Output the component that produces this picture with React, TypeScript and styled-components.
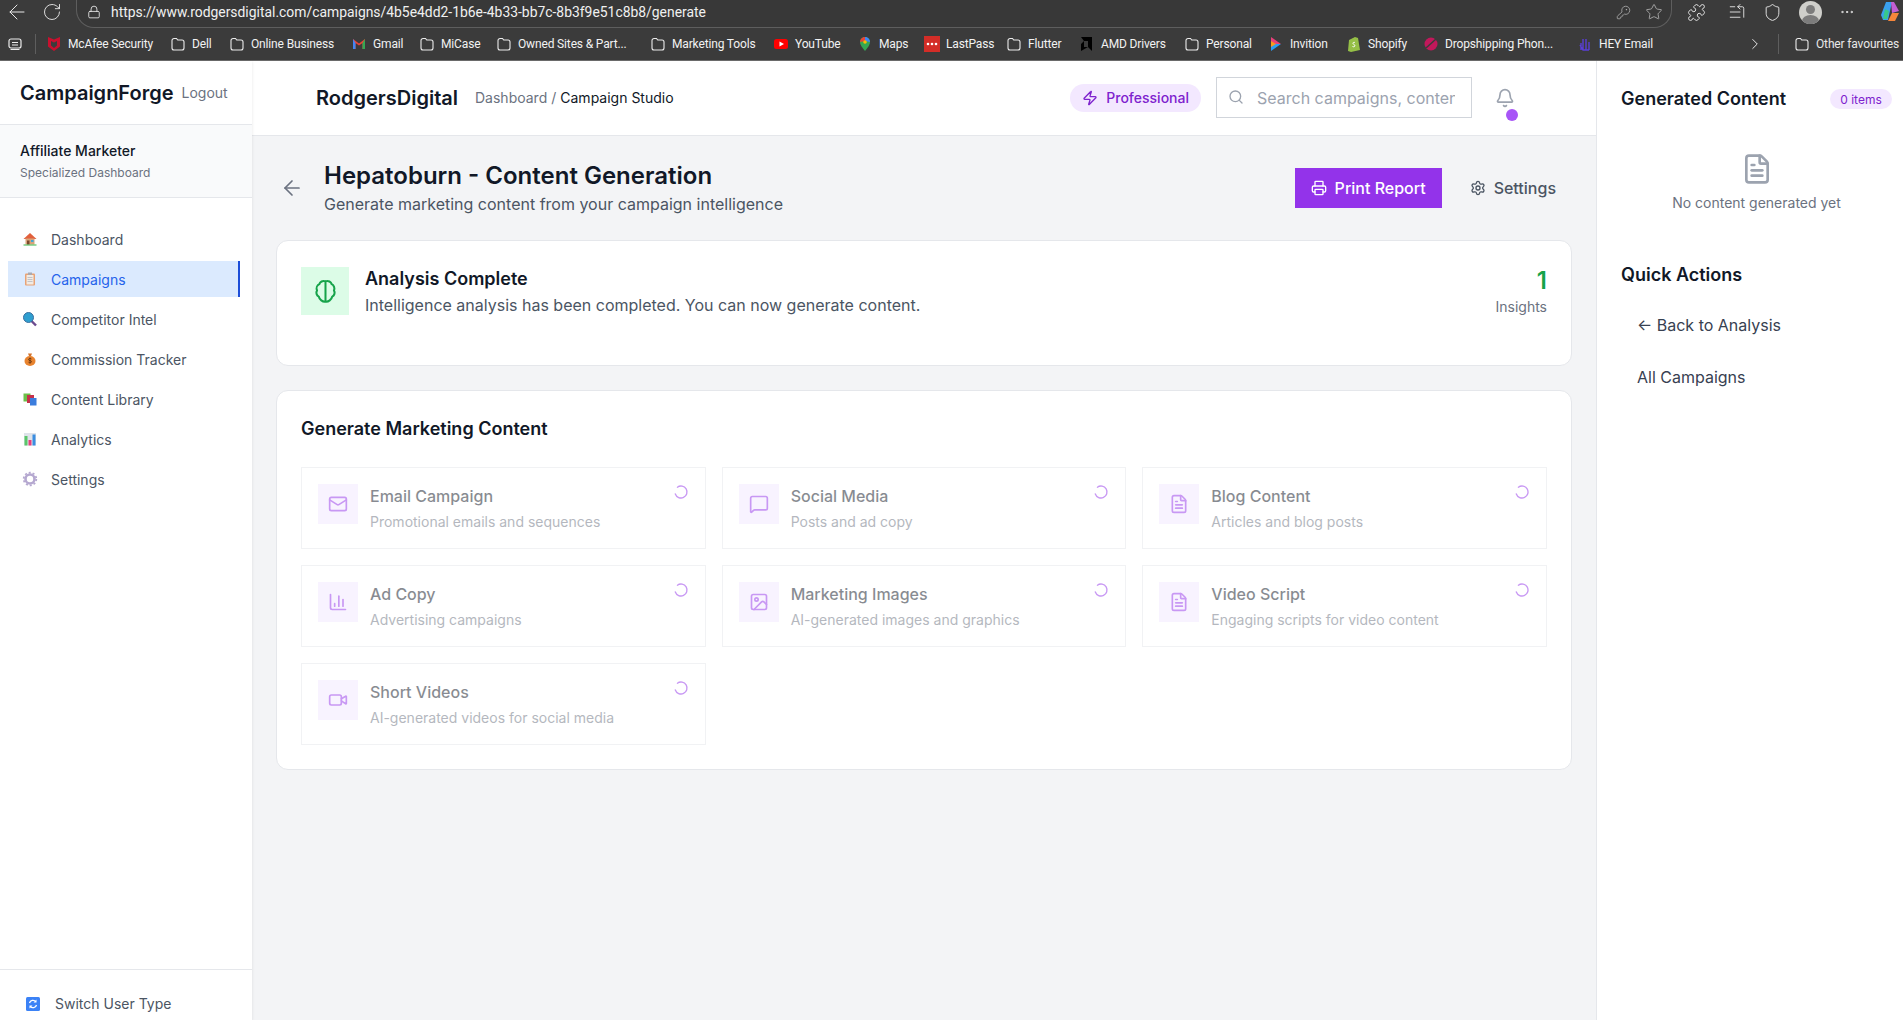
import React from "react";
import styled, { createGlobalStyle } from "styled-components";
import {
  ArrowLeft, Bell, ChartColumn, Ellipsis, FileText, Image, KeyRound, ListStart, Loader2, Lock, Mail,
  MessageSquare, Printer, Puzzle, RotateCw, Search, Settings, Shield, Star, Video, Zap, ChevronRight,
} from "lucide-react";

const Global = createGlobalStyle`
  * { box-sizing: border-box; }
  html, body { margin: 0; padding: 0; height: 100%; overflow: hidden; background: #f3f4f6; }
  body { font-family: Inter, "Liberation Sans", sans-serif; color: #111827; }
`;

const Page = styled.div`display: flex; flex-direction: column; width: 1903px; height: 1020px; overflow: hidden;`;

/* Browser chrome */
const Chrome = styled.div`
  height: 61px; flex: none; background: #3b3b3b; color: #f2f2f2; border-bottom: 1px solid #6a6a6a;
  font-family: Roboto, "Liberation Sans", sans-serif; display: flex; flex-direction: column;
`;
const AddressRow = styled.div`height: 27px; display: flex; align-items: flex-start;`;
const NavBtn = styled.span`width: 34px; height: 24px; display: flex; align-items: center; justify-content: center; color: #e8e8e8; margin-right: 1px;`;
const Omnibox = styled.div`
  width: 1596px; height: 31px; margin: -3px 0 0 6px; display: flex; align-items: center; padding: 3px 0 3px 10px;
  border: 1px solid #5e5e5e; border-top: 0; border-radius: 0 0 18px 18px; background: #383838;
`;
const Url = styled.span`font-size: 13.9px; margin-left: 10px; color: #f0f0f0; white-space: nowrap;`;
const OmniEnd = styled.div`margin-left: auto; display: flex; align-items: center; gap: 14px; padding-right: 8px; color: #b5b5b5;`;
const ToolIcons = styled.div`display: flex; align-items: center; height: 24px; margin-left: 15px; color: #e8e8e8;`;
const ToolSlot = styled.span<{ $ml: number }>`display: flex; margin-left: ${(p) => p.$ml}px;`;
const Avatar = styled.span`width: 23px; height: 23px; border-radius: 50%; background: #cfcfcb; position: relative; overflow: hidden; display: block;
  &::before { content: ""; position: absolute; left: 7px; top: 4px; width: 9px; height: 9px; border-radius: 50%; background: #7c7c7c; }
  &::after { content: ""; position: absolute; left: 3px; top: 14px; width: 17px; height: 12px; border-radius: 50%; background: #7c7c7c; }
`;
const BookmarkRow = styled.div`flex: 1; display: flex; align-items: center; padding-left: 7px; font-size: 12px; letter-spacing: -0.15px; white-space: nowrap;`;
const BookmarkItem = styled.span<{ $w: number }>`display: flex; align-items: center; gap: 6px; width: ${(p) => p.$w}px; flex: none;`;
const Divider = styled.span<{ $l: number; $r: number }>`width: 1px; height: 20px; background: #5e5e5e; margin: 0 ${(p) => p.$r}px 0 ${(p) => p.$l}px; flex: none;`;
const EndGroup = styled.div`margin-left: auto; display: flex; align-items: center; color: #e8e8e8;`;

/* Body */
const Body = styled.div`flex: 1; display: flex; min-height: 0;`;

const Sidebar = styled.aside`width: 252px; flex: none; background: #fff; display: flex; flex-direction: column; box-shadow: 0 1px 3px rgba(0,0,0,.1); z-index: 2;`;
const Brand = styled.div`height: 64px; display: flex; align-items: center; padding-left: 20px; gap: 8px; border-bottom: 1px solid #e5e7eb;`;
const BrandName = styled.div`font-size: 20px; font-weight: 600; line-height: 28px; color: #111827;`;
const Logout = styled.span`font-size: 14px; color: #6b7280;`;
const UserBox = styled.div`height: 73px; padding: 16px 20px 0; background: #f9fafb; border-bottom: 1px solid #e5e7eb;`;
const UserName = styled.div`font-size: 14px; font-weight: 500; line-height: 20px; color: #111827;`;
const UserSub = styled.div`font-size: 12px; line-height: 16px; margin-top: 4px; color: #6b7280;`;
const Nav = styled.nav`padding: 23px 12px 0 8px; display: flex; flex-direction: column; gap: 4px;`;
const NavItem = styled.div<{ $active?: boolean }>`
  height: 36px; display: flex; align-items: center; gap: 13px; padding-left: 14px; font-size: 14px;
  color: ${(p) => (p.$active ? "#2563eb" : "#4b5563")};
  background: ${(p) => (p.$active ? "#dbeafe" : "transparent")};
  border-right: 2px solid ${(p) => (p.$active ? "#1d4ed8" : "transparent")};
`;
const SideFoot = styled.div`margin-top: auto; height: 51px; border-top: 1px solid #e5e7eb; display: flex; align-items: center; padding: 17px 0 0 26px; gap: 15px; font-size: 14px; color: #4b5563;`;

const Main = styled.main`flex: 1; min-width: 0; display: flex; flex-direction: column; background: #f3f4f6;`;
const TopBar = styled.header`height: 75px; flex: none; background: #fff; border-bottom: 1px solid #e5e7eb; display: flex; align-items: center; padding: 0 0 1px 64px;`;
const Org = styled.div`font-size: 20px; font-weight: 600; color: #111827; margin-right: 17px;`;
const Crumbs = styled.div`font-size: 14px; color: #6b7280; display: flex; gap: 4px;`;
const CrumbNow = styled.span`color: #111827;`;
const TopRight = styled.div`margin-left: auto; display: flex; align-items: center; padding-right: 81px;`;
const Plan = styled.span`height: 28px; display: flex; align-items: center; gap: 8px; padding: 0 12px; border-radius: 999px; background: #f3e8ff; color: #7e22ce; font-size: 14px; font-weight: 500;`;
const SearchBox = styled.div`position: relative; width: 256px; height: 41px; margin-left: 15px; color: #9ca3af;
  svg { position: absolute; left: 12px; top: 12px; }
`;
const SearchInput = styled.input`width: 100%; height: 100%; border: 1px solid #d1d5db; background: #fff; padding: 0 16px 0 40px; font: 16px Inter, sans-serif; outline: 0; border-radius: 0;
  &::placeholder { color: #9ca3af; opacity: 1; }
`;
const BellWrap = styled.span`position: relative; margin-left: 23px; width: 20px; height: 20px; color: #9ca3af; display: block;`;
const BellDot = styled.span`position: absolute; left: 11px; top: 21px; width: 12px; height: 12px; border-radius: 50%; background: #a855f7;`;

const Content = styled.div`padding: 24px 24px; display: flex; flex-direction: column; gap: 24px;`;
const HeadRow = styled.div`display: flex; align-items: center; height: 56px; margin-bottom: 0;`;
const BackIcon = styled.span`width: 24px; flex: none; margin: 0 20px 0 4px; color: #6b7280; display: flex;`;
const PageTitle = styled.h1`margin: 0; font-size: 24px; line-height: 32px; font-weight: 600; color: #111827;`;
const PageSub = styled.p`margin: 0; font-size: 16px; line-height: 24px; color: #4b5563;`;
const HeadActions = styled.div`margin-left: auto; display: flex; align-items: center; gap: 12px;`;
const PrimaryBtn = styled.button`height: 40px; width: 147px; border: 0; background: #9333ea; color: #fff; display: flex; align-items: center; justify-content: center; gap: 8px; font: 500 16px Inter, sans-serif;`;
const GhostBtn = styled.button`height: 40px; border: 0; background: transparent; color: #4b5563; display: flex; align-items: center; gap: 8px; padding: 0 16px; font: 500 16px Inter, sans-serif;`;

const Card = styled.section`background: #fff; border: 1px solid #e5e7eb; border-radius: 12px; padding: 24px;`;
const StatusRow = styled.div`display: flex; align-items: center; margin-bottom: 24px;`;
const StatusIcon = styled.span`width: 48px; height: 48px; background: #dcfce7; color: #16a34a; display: flex; align-items: center; justify-content: center; margin-right: 16px;`;
const StatusTitle = styled.div`font-size: 18px; line-height: 28px; font-weight: 600; color: #111827;`;
const StatusText = styled.div`font-size: 16px; line-height: 24px; color: #4b5563;`;
const StatBox = styled.div`margin-left: auto; text-align: right;`;
const StatNum = styled.div`font-size: 24px; line-height: 32px; font-weight: 600; color: #16a34a;`;
const StatLabel = styled.div`font-size: 14px; line-height: 20px; color: #6b7280;`;

const SectionTitle = styled.h2`margin: 0 0 24px; font-size: 18px; line-height: 28px; font-weight: 600; color: #111827;`;
const Grid = styled.div`display: grid; grid-template-columns: repeat(3, 1fr); gap: 16px;`;
const Tile = styled.div`position: relative; height: 82px; border: 1px solid #e5e7eb; padding: 16px; display: flex; gap: 12px; opacity: .5; background: #fff;`;
const TileIcon = styled.span`width: 40px; height: 40px; background: #f3e8ff; color: #9333ea; display: flex; align-items: center; justify-content: center; flex: none;`;
const TileTitle = styled.div`font-size: 16px; line-height: 24px; font-weight: 500; color: #111827;`;
const TileDesc = styled.div`font-size: 14px; line-height: 20px; margin-top: 4px; color: #6b7280;`;
const Spinner = styled.span`position: absolute; right: 16px; top: 16px; color: #9333ea; display: flex; transform: rotate(233deg);`;

const Aside = styled.aside`width: 307px; flex: none; background: #fff; border-left: 1px solid #e5e7eb; padding: 24px 11px 0 24px;`;
const AsideHead = styled.div`display: flex; align-items: center; justify-content: space-between; height: 28px;`;
const AsideTitle = styled.h3`margin: 0; font-size: 18px; line-height: 28px; font-weight: 600; color: #111827;`;
const Count = styled.span`height: 20px; width: 62px; display: flex; align-items: center; justify-content: center; border-radius: 999px; background: #f3e8ff; color: #7e22ce; font-size: 12px;`;
const Empty = styled.div`display: flex; flex-direction: column; align-items: center; padding: 40px 0 48px; gap: 8px; color: #9ca3af;`;
const EmptyText = styled.div`font-size: 14px; line-height: 20px; color: #6b7280;`;
const QuickList = styled.div`margin-top: 10px; display: flex; flex-direction: column;`;
const QuickLink = styled.div`height: 52px; padding-left: 16px; display: flex; align-items: center; font-size: 16px; color: #374151;`;

const Folder = () => (
  <svg width="16" height="16" viewBox="0 0 16 16" fill="none" stroke="#ececec" strokeWidth="1.1"><path d="M2 4.5a2 2 0 0 1 2-2h2.5l1.2 1.5H12a2 2 0 0 1 2 2V12a2 2 0 0 1-2 2H4a2 2 0 0 1-2-2z" /></svg>
);
const Fav = ({ children }: { children: React.ReactNode }) => <svg width="16" height="16" viewBox="0 0 16 16">{children}</svg>;

const bookmarks: [string, number, React.ReactNode][] = [
  ["McAfee Security", 124, <Fav><path d="M2 1l6 2.500L14 1v9.500L8 15l-6-4.500z" fill="#c8102e" /><path d="M5 5l3 1.500L11 5v4.500L8 12 5 9.500z" fill="#3b3b3b" /></Fav>],
  ["Dell", 59, <Folder />],
  ["Online Business", 122, <Folder />],
  ["Gmail", 68, <Fav><path d="M2 3v10h2.500V7L8 9.500 11.500 7v6H14V3l-6 4.500z" fill="#ea4335" /><path d="M2 3v10h2.500V7z" fill="#4285f4" /><path d="M14 3v10h-2.500V7z" fill="#34a853" /></Fav>],
  ["MiCase", 77, <Folder />],
  ["Owned Sites & Part...", 154, <Folder />],
  ["Marketing Tools", 123, <Folder />],
  ["YouTube", 84, <Fav><rect x="1" y="3" width="14" height="10" rx="2.500" fill="#f00" /><path d="M6.500 5.500v5L11 8z" fill="#fff" /></Fav>],
  ["Maps", 67, <Fav><path d="M8 1a5 5 0 0 0-5 5c0 3.500 5 9 5 9s5-5.500 5-9a5 5 0 0 0-5-5z" fill="#34a853" /><path d="M8 1a5 5 0 0 0-5 5l5-1z" fill="#ea4335" /><path d="M8 1a5 5 0 0 1 5 5L8 5z" fill="#4285f4" /><circle cx="8" cy="6" r="1.800" fill="#fbbc04" /></Fav>],
  ["LastPass", 82, <Fav><rect width="16" height="16" fill="#d32d27" /><circle cx="4" cy="8" r="1.300" fill="#fff" /><circle cx="8" cy="8" r="1.300" fill="#fff" /><circle cx="12" cy="8" r="1.300" fill="#fff" /></Fav>],
  ["Flutter", 73, <Folder />],
  ["AMD Drivers", 105, <Fav><path d="M2 1h11v14l-4-4V5H5z" fill="#000" /><path d="M2 15V8l3-3v6h4z" fill="#000" /></Fav>],
  ["Personal", 84, <Folder />],
  ["Invition", 78, <Fav><path d="M3 1l10 7H3z" fill="#e8407a" /><path d="M3 15l10-7H3z" fill="#2a9df4" /><path d="M3 5l5 3-5 3z" fill="#f79a1f" /></Fav>],
  ["Shopify", 77, <Fav><path d="M3 4l6-3 3 1 2 12-9 2-3-1z" fill="#95bf47" /><path d="M9 6.500c-2-.7-3 1-1 2s.5 3-1.500 2" stroke="#fff" fill="none" /></Fav>],
  ["Dropshipping Phon...", 154, <Fav><circle cx="8" cy="8" r="6.500" fill="#c2185b" /><path d="M3 12L13 3" stroke="#3b3b3b" strokeWidth="1.500" /></Fav>],
  ["HEY Email", 80, <Fav><path d="M4 14V7m2 7V3m3 11V3m3 11V6M3 9l3 5h6" stroke="#5a3fd6" strokeWidth="1.400" fill="none" /></Fav>],
];

const NavEmoji: Record<string, React.ReactNode> = {
  Dashboard: <><path d="M1.500 8L8 2l6.500 6z" fill="#e2603c" /><rect x="3.500" y="7.500" width="9" height="6" fill="#d9a37a" /><rect x="5" y="9.500" width="2.500" height="4" fill="#7a4a2e" /><rect x="9" y="9" width="2.500" height="2" fill="#3fa7d6" /><rect x="1.500" y="13.500" width="13" height="1" fill="#3bb54a" /></>,
  Campaigns: <><rect x="3" y="2.500" width="10" height="12" rx="1" fill="#e8a274" /><rect x="4.500" y="4" width="7" height="9.500" fill="#f1ebe3" /><rect x="6" y="1.500" width="4" height="2.500" fill="#a9a9b0" /><path d="M5.500 6.500h5M5.500 8.500h5M5.500 10.500h5" stroke="#b8b8c0" strokeWidth=".8" /></>,
  "Competitor Intel": <><path d="M9 9.500l5 5" stroke="#6b4a8e" strokeWidth="2.400" /><circle cx="6.500" cy="6.500" r="5" fill="#2f9fd0" stroke="#3a6e9e" /></>,
  "Commission Tracker": <><ellipse cx="8" cy="10" rx="5.500" ry="5" fill="#e8832e" /><path d="M6 2.500h4L9 5H7z" fill="#d4722a" /><path d="M9.500 8c-1-1-3-.6-3 .6s3 .8 3 2-2 1.600-3 .6M8 6.500v6" stroke="#5a3010" strokeWidth=".8" fill="none" /></>,
  "Content Library": <><rect x="1.500" y="2.500" width="7" height="8" fill="#6cc04a" /><rect x="5" y="4" width="7" height="8" fill="#c7304a" /><rect x="8" y="7" width="6.500" height="7.500" fill="#3b7ddd" /></>,
  Analytics: <><rect x="2" y="2" width="12" height="12.500" fill="#dfe3ea" /><rect x="2.500" y="5" width="3" height="9.500" fill="#5bc66a" /><rect x="6.500" y="9" width="3" height="5.500" fill="#e83e7c" /><rect x="10.500" y="3.500" width="3" height="11" fill="#3b8de0" /></>,
  Settings: <><circle cx="8" cy="8" r="4.500" fill="none" stroke="#b5a8d0" strokeWidth="2.600" /><circle cx="8" cy="8" r="6.300" fill="none" stroke="#b5a8d0" strokeWidth="1.800" strokeDasharray="2 1.950" /></>,
};
const navItems = ["Dashboard", "Campaigns", "Competitor Intel", "Commission Tracker", "Content Library", "Analytics", "Settings"];

const BrainGlyph = () => (
  <svg width="27" height="27" viewBox="0 0 24 24" fill="none" stroke="currentColor" strokeWidth="1.800" strokeLinejoin="round" strokeLinecap="round">
    <path d="M12 3v18M12 3c-2.500-1-5 .5-5.500 2.500C4.500 6.500 3.500 9 4.500 11c-1.200 2-.5 4.500 1.500 5.500.5 2.500 3.500 5 6 4.500 2.500.5 5.500-2 6-4.500 2-1 2.700-3.500 1.500-5.500 1-2 0-4.500-2-5.500C17 3.500 14.500 2 12 3z" />
  </svg>
);

const tiles: [string, string, React.ElementType][] = [
  ["Email Campaign", "Promotional emails and sequences", Mail],
  ["Social Media", "Posts and ad copy", MessageSquare],
  ["Blog Content", "Articles and blog posts", FileText],
  ["Ad Copy", "Advertising campaigns", ChartColumn],
  ["Marketing Images", "AI-generated images and graphics", Image],
  ["Video Script", "Engaging scripts for video content", FileText],
  ["Short Videos", "AI-generated videos for social media", Video],
];

export default function App() {
  return (
    <Page>
      <Global />
      <Chrome>
        <AddressRow>
          <NavBtn><ArrowLeft size={24} strokeWidth={1} /></NavBtn>
          <NavBtn><RotateCw size={20} strokeWidth={1.1} /></NavBtn>
          <Omnibox>
            <Lock size={14} strokeWidth={1.4} />
            <Url>https://www.rodgersdigital.com/campaigns/4b5e4dd2-1b6e-4b33-bb7c-8b3f9e51c8b8/generate</Url>
            <OmniEnd><KeyRound size={15} strokeWidth={1.2} /><Star size={18} strokeWidth={1.1} /></OmniEnd>
          </Omnibox>
          <ToolIcons>
            <ToolSlot $ml={0}><Puzzle size={19} strokeWidth={1.2} /></ToolSlot>
            <ToolSlot $ml={22}><ListStart size={18} strokeWidth={1.2} /></ToolSlot>
            <ToolSlot $ml={17}><Shield size={19} strokeWidth={1.2} /></ToolSlot>
            <ToolSlot $ml={17}><Avatar /></ToolSlot>
            <ToolSlot $ml={17}><Ellipsis size={16} strokeWidth={1.5} /></ToolSlot>
            <ToolSlot $ml={25}>
              <svg width="20" height="22" viewBox="0 0 20 22"><path d="M6 1h6L8 19H3L1 14z" fill="#3aa0ef" /><path d="M11 1h3l5 9-7 2z" fill="#c25fd4" /><path d="M8 20l4-8h7l-4 8z" fill="#f5863a" /><path d="M5 8l4 2-2 8H3z" fill="#38c88a" /></svg>
            </ToolSlot>
          </ToolIcons>
        </AddressRow>
        <BookmarkRow>
          <svg width="16" height="16" viewBox="0 0 16 16" fill="none" stroke="#ececec" strokeWidth="1.200"><rect x="2" y="3" width="12" height="9" rx="2" /><path d="M5 6.500h6M5 9h6M3.500 13.500h9" /></svg>
          <Divider $l={12} $r={10} />
          {bookmarks.map(([label, w, icon]) => (
            <BookmarkItem key={label} $w={w}>{icon}{label}</BookmarkItem>
          ))}
          <EndGroup>
            <ChevronRight size={18} strokeWidth={1.3} />
            <Divider $l={14} $r={15} />
            <BookmarkItem $w={109}><Folder />Other favourites</BookmarkItem>
          </EndGroup>
        </BookmarkRow>
      </Chrome>

      <Body>
        <Sidebar>
          <Brand><BrandName>CampaignForge</BrandName><Logout>Logout</Logout></Brand>
          <UserBox>
            <UserName>Affiliate Marketer</UserName>
            <UserSub>Specialized Dashboard</UserSub>
          </UserBox>
          <Nav>
            {navItems.map((n) => (
              <NavItem key={n} $active={n === "Campaigns"}>
                <svg width="16" height="16" viewBox="0 0 16 16">{NavEmoji[n]}</svg>{n}
              </NavItem>
            ))}
          </Nav>
          <SideFoot>
            <svg width="14" height="14" viewBox="0 0 14 14"><rect width="14" height="14" rx="1.500" fill="#3b82f6" /><path d="M3.500 6a3.600 3.600 0 0 1 6.300-1.300M10.500 8a3.600 3.600 0 0 1-6.300 1.300" stroke="#fff" strokeWidth="1.300" fill="none" /><path d="M10.500 2.500v3h-3zM3.500 11.500v-3h3z" fill="#fff" /></svg>
            Switch User Type
          </SideFoot>
        </Sidebar>

        <Main>
          <TopBar>
            <Org>RodgersDigital</Org>
            <Crumbs>Dashboard<span>/</span><CrumbNow>Campaign Studio</CrumbNow></Crumbs>
            <TopRight>
              <Plan><Zap size={16} />Professional</Plan>
              <SearchBox>
                <Search size={16} />
                <SearchInput placeholder="Search campaigns, content..." readOnly />
              </SearchBox>
              <BellWrap><Bell size={20} /><BellDot /></BellWrap>
            </TopRight>
          </TopBar>
          <Content>
            <HeadRow>
              <BackIcon><ArrowLeft size={24} strokeWidth={1.7} /></BackIcon>
              <div>
                <PageTitle>Hepatoburn - Content Generation</PageTitle>
                <PageSub>Generate marketing content from your campaign intelligence</PageSub>
              </div>
              <HeadActions>
                <PrimaryBtn><Printer size={16} />Print Report</PrimaryBtn>
                <GhostBtn><Settings size={16} />Settings</GhostBtn>
              </HeadActions>
            </HeadRow>
            <Card>
              <StatusRow>
                <StatusIcon><BrainGlyph /></StatusIcon>
                <div>
                  <StatusTitle>Analysis Complete</StatusTitle>
                  <StatusText>Intelligence analysis has been completed. You can now generate content.</StatusText>
                </div>
                <StatBox>
                  <StatNum>1</StatNum>
                  <StatLabel>Insights</StatLabel>
                </StatBox>
              </StatusRow>
            </Card>
            <Card>
              <SectionTitle>Generate Marketing Content</SectionTitle>
              <Grid>
                {tiles.map(([title, desc, Icon]) => (
                  <Tile key={title}>
                    <TileIcon><Icon size={20} /></TileIcon>
                    <div>
                      <TileTitle>{title}</TileTitle>
                      <TileDesc>{desc}</TileDesc>
                    </div>
                    <Spinner><Loader2 size={16} /></Spinner>
                  </Tile>
                ))}
              </Grid>
            </Card>
          </Content>
        </Main>

        <Aside>
          <AsideHead><AsideTitle>Generated Content</AsideTitle><Count>0 items</Count></AsideHead>
          <Empty>
            <FileText size={32} />
            <EmptyText>No content generated yet</EmptyText>
          </Empty>
          <AsideTitle>Quick Actions</AsideTitle>
          <QuickList>
            <QuickLink>← Back to Analysis</QuickLink>
            <QuickLink>All Campaigns</QuickLink>
          </QuickList>
        </Aside>
      </Body>
    </Page>
  );
}
